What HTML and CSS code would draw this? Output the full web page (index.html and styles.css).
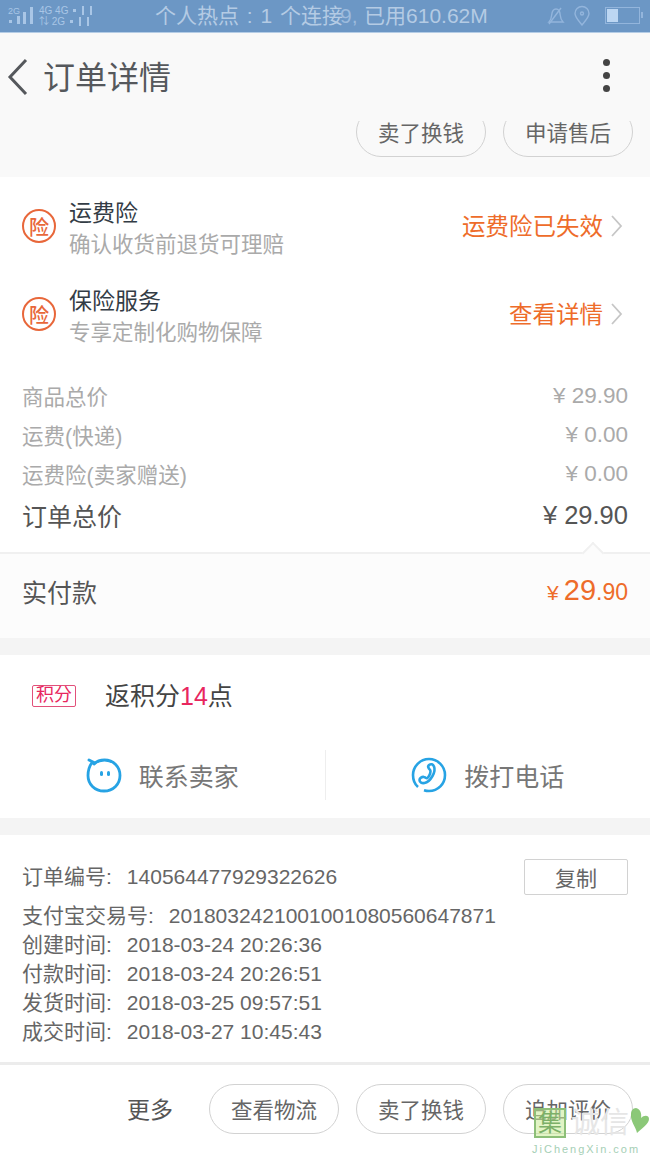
FILE: index.html
```html
<!DOCTYPE html>
<html lang="zh-CN">
<head>
    <meta charset="UTF-8">
    <meta name="viewport" content="width=device-width, initial-scale=1.0">
    <title>订单详情</title>
    <link rel="stylesheet" href="styles.css">
</head>
<body>
    <div class="page">
        <div class="status-bar">
            <div class="signal">
                <div class="signal-sim">
                    <span class="signal-label">2G</span>
                    <svg width="26" height="18" viewBox="0 0 26 18"><g fill="#a9c6e6"><rect x="1" y="13" width="3" height="3"/><rect x="9" y="9" width="3" height="8"/><rect x="15" y="5" width="3" height="12"/><rect x="22" y="0" width="3" height="17"/></g></svg>
                </div>
                <div class="signal-net">
                    <div class="signal-line"><span>4G 4G</span><i class="dot"></i><i class="bar"></i><i class="bar"></i></div>
                    <div class="signal-line"><span>⇅ 2G</span><i class="dot"></i><i class="bar"></i><i class="bar"></i></div>
                </div>
            </div>
            <div class="status-text">
                <span class="status-hotspot">个人热点 : 1 个连接</span><span class="status-under">9,</span><span class="status-used">已用610.62M</span>
            </div>
            <div class="status-icons">
                <svg width="20" height="20" viewBox="0 0 20 20" fill="none" stroke="#93b5dc" stroke-width="1.4"><path d="M3 16h14c-2-2-2.500-4-2.800-7C14 6 12.500 3 10 3 7.500 3 6 6 5.700 9 5.400 12 5 14 3 16z"/><path d="M3 18L15 2"/></svg>
                <svg width="18" height="22" viewBox="0 0 18 22" fill="none" stroke="#93b5dc" stroke-width="1.4"><path d="M9 20C5 15 2 12 2 8.500a7 7 0 0 1 14 0C16 12 13 15 9 20z"/><circle cx="9" cy="8.500" r="1.500"/></svg>
                <div class="battery"><div class="battery-level"></div></div>
            </div>
        </div>

        <div class="top">
            <div class="title-bar">
                <svg class="back" width="24" height="38" viewBox="0 0 24 38" fill="none" stroke="#55585c" stroke-width="3"><path d="M20 2L4 19l16 17"/></svg>
                <h1 class="title">订单详情</h1>
                <div class="more"><i></i><i></i><i></i></div>
            </div>
            <div class="top-actions">
                <span class="pill pill-cut">卖了换钱</span>
                <span class="pill pill-cut">申请售后</span>
            </div>
        </div>

        <div class="card">
            <div class="service">
                <span class="badge">险</span>
                <div class="service-text">
                    <div class="service-name">运费险</div>
                    <div class="service-desc">确认收货前退货可理赔</div>
                </div>
                <span class="service-link">运费险已失效</span>
                <svg class="chevron" width="13" height="24" viewBox="0 0 13 24" fill="none" stroke="#c6c6c6" stroke-width="1.800"><path d="M2 2l9 10-9 10"/></svg>
            </div>
            <div class="service">
                <span class="badge">险</span>
                <div class="service-text">
                    <div class="service-name">保险服务</div>
                    <div class="service-desc">专享定制化购物保障</div>
                </div>
                <span class="service-link">查看详情</span>
                <svg class="chevron" width="13" height="24" viewBox="0 0 13 24" fill="none" stroke="#c6c6c6" stroke-width="1.800"><path d="M2 2l9 10-9 10"/></svg>
            </div>

            <div class="prices">
                <div class="price-row"><span class="price-label">商品总价</span><span class="num">¥ 29.90</span></div>
                <div class="price-row"><span class="price-label">运费(快递)</span><span class="num">¥ 0.00</span></div>
                <div class="price-row"><span class="price-label">运费险(卖家赠送)</span><span class="num">¥ 0.00</span></div>
                <div class="price-total"><span class="price-label">订单总价</span><span class="num">¥ 29.90</span></div>
            </div>

            <div class="paid">
                <span class="notch"></span>
                <span>实付款</span>
                <span class="paid-amount"><small class="paid-yen">¥</small>29<small>.90</small></span>
            </div>
        </div>

        <div class="gap"></div>

        <div class="contact-card">
            <div class="points">
                <span class="points-tag">积分</span>
                <span>返积分<em>14</em>点</span>
            </div>
            <div class="contact">
                <div class="contact-item">
                    <svg width="36" height="36" viewBox="0 0 36 36" fill="none" stroke="#27a3e4" stroke-width="2.800"><path d="M6 5.500C3.500 9 2 13 2 18.500 2 27 8.500 34 18 34s16-7 16-15.500S27.500 3 18.500 3C14 3 10.500 4.500 8 7z"/><path d="M3 3l6 3" stroke-linecap="round"/><g fill="#27a3e4" stroke="none"><rect x="14" y="14" width="3" height="5" rx="1.500"/><rect x="21" y="14" width="3" height="5" rx="1.500"/></g></svg>
                    <span>联系卖家</span>
                </div>
                <div class="contact-item">
                    <svg width="36" height="36" viewBox="0 0 36 36" fill="none" stroke="#27a3e4" stroke-width="2.600"><path d="M7 30C3.500 27 2 23 2 18 2 9.500 9 2 18 2c8.500 0 16 7 16 16s-7 16-16 16c-2 0-3.500-.3-5-.8"/><path d="M18 8c2-1.500 4-.8 5 1.500 1 2.500.5 6-1.500 9.500-2 3.500-5 6.500-8 7-2.500.5-5-.5-5-3 0-2 2.500-3.500 4.500-3 1.500.3 2 1.500 3 1.200 1.500-.5 3.500-4.500 3.500-7 0-1.500-1-1.700-1.800-3C17.200 10.500 17 9 18 8z"/></svg>
                    <span>拨打电话</span>
                </div>
            </div>
        </div>

        <div class="gap"></div>

        <div class="info">
            <div class="info-row info-first">
                <span class="info-line">订单编号:<span class="info-val">140564477929322626</span></span>
                <span class="copy">复制</span>
            </div>
            <div class="info-line">支付宝交易号:<span class="info-val">2018032421001001080560647871</span></div>
            <div class="info-line">创建时间:<span class="info-val">2018-03-24 20:26:36</span></div>
            <div class="info-line">付款时间:<span class="info-val">2018-03-24 20:26:51</span></div>
            <div class="info-line">发货时间:<span class="info-val">2018-03-25 09:57:51</span></div>
            <div class="info-line">成交时间:<span class="info-val">2018-03-27 10:45:43</span></div>
        </div>

        <div class="bottom-bar">
            <span class="more-text">更多</span>
            <span class="pill">查看物流</span>
            <span class="pill">卖了换钱</span>
            <span class="pill">追加评价</span>
        </div>

        <div class="watermark">
            <div class="wm-top">
                <span class="wm-box">集</span>
                <span class="wm-name">诚信</span>
                <svg class="wm-heart" width="22" height="30" viewBox="0 0 22 30"><path d="M8 1c4 1 6 5 5 10 3-3 8-3 8 1 0 5-7 9-12 14C8 20 2 14 3 7 3 4 5 1 8 1z" fill="#7fc36a"/></svg>
            </div>
            <div class="wm-url">JiChengXin.com</div>
        </div>
    </div>
</body>
</html>
```

FILE: styles.css
```css
* {
    box-sizing: border-box;
}
body {
    margin: 0;
    background-color: #fff;
    font-family: "Liberation Sans", "Noto Sans CJK SC", sans-serif;
    color: #444;
}
.page {
    position: relative;
    width: 650px;
    height: 1155px;
    overflow: hidden;
}

/* status bar */
.status-bar {
    height: 33px;
    padding: 0 10px 1px 8px;
    background-color: #6c97c5;
    border-bottom: 1px solid #b5cde6;
    display: flex;
    align-items: center;
}
.signal {
    width: 147px;
    display: flex;
    gap: 5px;
    align-items: center;
}
.signal-sim {
    position: relative;
    display: flex;
    align-items: center;
    width: 26px;
}
.signal-label {
    position: absolute;
    left: 0;
    top: -1px;
    font-size: 9px;
    line-height: 10px;
    color: #a9c6e6;
}
.signal-net {
    display: flex;
    flex-direction: column;
    font-size: 10px;
    line-height: 11px;
    color: #a9c6e6;
}
.signal-line {
    display: flex;
    align-items: center;
    gap: 3px;
}
.dot {
    width: 3px;
    height: 3px;
    margin-left: 2px;
    background-color: #a9c6e6;
}
.bar {
    width: 2px;
    height: 9px;
    margin-left: 3px;
    background-color: #a9c6e6;
}
.status-text {
    flex: 1;
    font-size: 21px;
    line-height: 30px;
    color: #b4cbe4;
    white-space: nowrap;
    display: flex;
}
.status-hotspot {
    word-spacing: 2px;
}
.status-under {
    margin-left: -3px;
    width: 18px;
    color: #9dbbdd;
}
.status-used {
    margin-left: 6px;
}
.status-icons {
    display: flex;
    align-items: center;
    gap: 7px;
}
.battery {
    position: relative;
    width: 35px;
    height: 17px;
    margin-left: 7px;
    border: 1px solid #93b5dc;
    padding: 1px;
}
.battery::after {
    content: "";
    position: absolute;
    right: -4px;
    top: 4px;
    width: 2px;
    height: 6px;
    background-color: #93b5dc;
}
.battery-level {
    width: 11px;
    height: 100%;
    background-color: #bcd6f2;
}

/* header */
.top {
    height: 144px;
    background-color: #f9f9f9;
}
.title-bar {
    height: 88px;
    padding: 0 40px 0 6px;
    display: flex;
    align-items: center;
}
.back {
    margin-right: 13px;
}
.title {
    flex: 1;
    margin: 0 0 4px;
    font-size: 32px;
    font-weight: 400;
    color: #55585c;
}
.more {
    margin-bottom: 3px;
    display: flex;
    flex-direction: column;
    gap: 6px;
}
.more i {
    width: 7px;
    height: 7px;
    border-radius: 50%;
    background-color: #444;
}
.top-actions {
    height: 36px;
    padding-right: 17px;
    display: flex;
    justify-content: flex-end;
    gap: 17px;
    overflow: hidden;
}
.pill {
    width: 130px;
    height: 50px;
    padding-bottom: 2px;
    border: 1px solid #d2d2d2;
    border-radius: 25px;
    font-size: 21.500px;
    color: #666;
    display: flex;
    align-items: center;
    justify-content: center;
    flex-shrink: 0;
}
.pill-cut {
    margin-top: -14px;
}

/* services and prices */
.card {
    height: 461px;
    padding-top: 5px;
}
.service {
    height: 88px;
    padding: 0 27px 0 22px;
    display: flex;
    align-items: center;
}
.badge {
    width: 34px;
    height: 34px;
    margin-right: 13px;
    border: 2px solid #e8673a;
    border-radius: 50%;
    font-size: 20px;
    font-weight: 500;
    color: #e8673a;
    display: flex;
    align-items: center;
    justify-content: center;
}
.service-text {
    flex: 1;
    padding-top: 6px;
}
.service-name {
    font-size: 23px;
    line-height: 32px;
    color: #333c45;
}
.service-desc {
    font-size: 21.500px;
    line-height: 32px;
    color: #aaa;
}
.service-link {
    margin-top: -2px;
    font-size: 23.500px;
    color: #ee6c2a;
}
.chevron {
    margin-left: 7px;
}
.prices {
    padding: 17px 22px 0;
}
.price-row {
    height: 39px;
    font-size: 21.500px;
    color: #aaa;
    display: flex;
    align-items: center;
    justify-content: space-between;
}
.price-row .price-label {
    margin-top: -1px;
    padding-top: 2px;
}
.price-row .num {
    padding-top: 3px;
}
.num {
    font-size: 22.500px;
}
.price-total {
    height: 43px;
    padding-top: 3px;
    font-size: 25px;
    color: #555;
    display: flex;
    align-items: center;
    justify-content: space-between;
}
.price-total .num {
    font-size: 25.500px;
}
.paid {
    position: relative;
    height: 86px;
    margin-top: 17px;
    padding: 0 22px 11px;
    background-color: #fcfcfc;
    border-top: 2px solid #f0f0f0;
    font-size: 25px;
    color: #555;
    display: flex;
    align-items: center;
    justify-content: space-between;
}
.notch {
    position: absolute;
    right: 49px;
    top: -9px;
    width: 16px;
    height: 16px;
    background-color: #fcfcfc;
    border-left: 2px solid #f0f0f0;
    border-top: 2px solid #f0f0f0;
    transform: rotate(45deg);
}
.paid-amount {
    font-size: 29px;
    color: #ee6c2a;
}
.paid-amount small {
    font-size: 23px;
}
.paid-amount .paid-yen {
    margin-right: 5px;
    font-size: 21px;
}
.gap {
    height: 17px;
    background-color: #f4f4f4;
}

/* points and contact */
.contact-card {
    height: 163px;
}
.points {
    height: 81px;
    padding: 0 0 3px 32px;
    font-size: 25px;
    color: #444;
    display: flex;
    align-items: center;
    gap: 29px;
}
.points em {
    font-style: normal;
    color: #e8265e;
}
.points-tag {
    width: 44px;
    height: 22px;
    margin-top: 3px;
    border: 1px solid #e2507a;
    border-radius: 2px;
    font-size: 18px;
    line-height: 19px;
    text-align: center;
    color: #e8265e;
}
.contact {
    height: 50px;
    margin-top: 14px;
    display: flex;
}
.contact-item {
    flex: 1;
    font-size: 25px;
    color: #777;
    display: flex;
    align-items: center;
    justify-content: center;
    gap: 17px;
}
.contact-item + .contact-item {
    border-left: 1px solid #eee;
}

/* order info */
.info {
    height: 227px;
    padding: 23px 22px 0;
    border-bottom: 0;
}
.info-row {
    display: flex;
    justify-content: space-between;
    align-items: center;
}
.info-first {
    height: 37px;
    margin-bottom: 6px;
}
.info-line {
    font-size: 21px;
    line-height: 29px;
    color: #666;
}
.info-val {
    margin-left: 15px;
}
.copy {
    width: 104px;
    height: 36px;
    border: 1px solid #d2d2d2;
    border-radius: 2px;
    font-size: 21px;
    color: #666;
    display: flex;
    align-items: center;
    justify-content: center;
}

/* bottom bar */
.bottom-bar {
    height: 93px;
    padding: 19px 17px 0 0;
    border-top: 3px solid #ececec;
    display: flex;
    justify-content: flex-end;
    align-items: flex-start;
    gap: 17px;
}
.more-text {
    margin-right: 19px;
    padding-top: 1px;
    font-size: 23px;
    line-height: 50px;
    color: #555;
}

/* watermark, sits over the bottom bar */
.watermark {
    position: absolute;
    left: 532px;
    top: 1108px;
    width: 118px;
}
.wm-top {
    display: flex;
    align-items: center;
}
.wm-box {
    width: 32px;
    height: 30px;
    margin-left: 2px;
    border: 2px solid #8dbf78;
    background-color: rgba(200, 235, 150, .55);
    font-size: 24px;
    line-height: 25px;
    text-align: center;
    color: #7cb068;
}
.wm-name {
    margin-left: 5px;
    font-size: 29px;
    line-height: 30px;
    color: #e6e6e6;
    white-space: nowrap;
}
.wm-heart {
    position: absolute;
    left: 96px;
    top: -1px;
    opacity: .9;
}
.wm-url {
    margin-top: 5px;
    font-size: 11px;
    letter-spacing: 2px;
    color: #a5cfb5;
    white-space: nowrap;
}
```
